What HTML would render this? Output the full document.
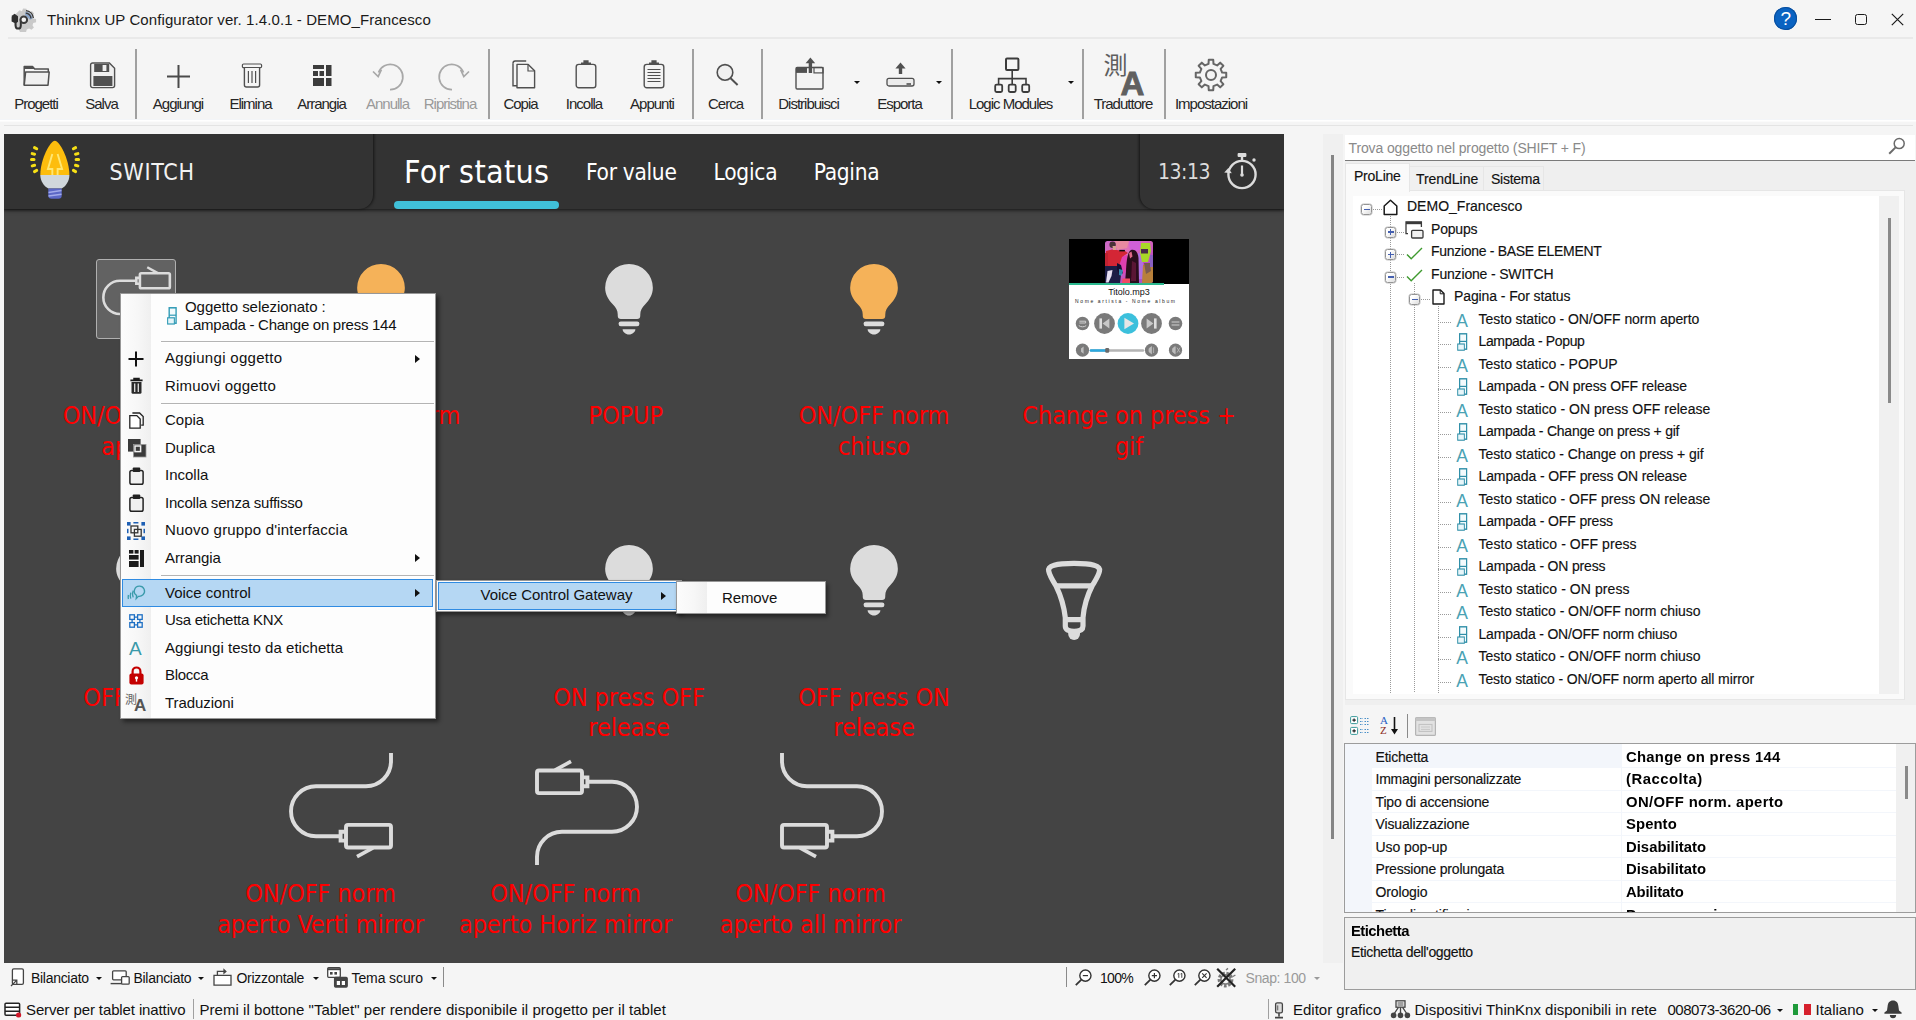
<!DOCTYPE html>
<html lang="it"><head><meta charset="utf-8"><title>Thinknx UP Configurator</title>
<style>
*{box-sizing:border-box;margin:0;padding:0}
html,body{width:1916px;height:1020px;overflow:hidden;background:#f5f5f5}
body{font-family:"Liberation Sans",sans-serif;font-size:15px;color:#000}
#app{position:relative;width:1916px;height:1020px;overflow:hidden;background:#f5f5f5}
.abs{position:absolute}
.t{position:absolute;white-space:pre;line-height:1}
svg{position:absolute;overflow:visible}
/* title bar */
.title{left:47px;top:12px;font-size:15px;letter-spacing:.09px;color:#1a1a1a}
.hline{position:absolute;height:1px;background:#e3e3e3}
/* toolbar */
.tb-lab{position:absolute;top:96px;font-size:15px;letter-spacing:-1px;color:#262626;white-space:pre;line-height:16px;text-align:center;transform:translateX(-50%)}
.tb-lab.dis{color:#9a9a9a}
.tb-sep{position:absolute;top:49px;width:2px;height:70px;background:#a0a0a0;margin-left:-.5px}
.dd{position:absolute;width:0;height:0;border-left:3.5px solid transparent;border-right:3.5px solid transparent;border-top:3.5px solid #111;margin-left:.5px}
/* canvas */
#canvas{position:absolute;left:4px;top:134px;width:1280px;height:829px;background:#444;overflow:hidden}
#hdr{position:absolute;left:0;top:0;width:1280px;height:75px;background:#333;box-shadow:0 1px 4px rgba(0,0,0,.75)}
.tah{font-family:"DejaVu Sans Condensed","DejaVu Sans","Liberation Sans",sans-serif}
.lab{position:absolute;color:#f00;font-family:"DejaVu Sans Condensed","DejaVu Sans","Liberation Sans",sans-serif;font-size:25px;line-height:30.2px;text-align:center;white-space:pre;transform:translateX(-50%);letter-spacing:-.08px}
/* menus */
.menu{position:absolute;background:#fdfdfd;border:1px solid #979797;box-shadow:3px 3px 4px rgba(0,0,0,.45)}
.menu .gut{position:absolute;left:0;top:0;bottom:0;width:30px;background:linear-gradient(90deg,#fcfcfc,#f7f7f7 55%,#efefef)}
.mi{position:absolute;left:43px;font-size:15px;white-space:pre;line-height:18px;color:#111}
.msep{position:absolute;left:30px;right:1px;height:2px;background:#b4b4b4;border-bottom:1px solid #fff}
.marr{position:absolute;width:0;height:0;border-top:4.5px solid transparent;border-bottom:4.5px solid transparent;border-left:5px solid #111}
/* right panel */
.tree{position:absolute;font-size:14px;-webkit-text-stroke:.15px #111;white-space:pre;line-height:16px;color:#111}
.pg{position:absolute;font-size:14px;-webkit-text-stroke:.15px #111;white-space:pre;line-height:16px;color:#111}
.pgv{position:absolute;font-size:14px;font-weight:700;white-space:pre;line-height:16px;color:#000}
/* bottom */
.bt{position:absolute;font-size:14px;letter-spacing:-.3px;white-space:pre;line-height:16px;color:#111}
.st{position:absolute;font-size:15px;white-space:pre;line-height:18px;color:#111;top:1001px}

</style></head>
<body>
<div id="app">
<!-- titlebar -->

<svg style="left:10px;top:7px" width="25" height="24" viewBox="0 0 25 24">
  <path d="M9.5 3.2l2.4 1 1.2-2.6 3.4.2.6 2.8 2.6 1 2.2-1.6 2.2 2.6-1.6 2.4 1 2.4 2.6.6v3.2l-2.8.8-.8 2.2 1.400 2.400-2.400 2.200-2.400-1.400-2.400 1-.6 2.600H10l-1.400-2.800-4-3.200-1.400-6 1.600-5z" fill="#c9c9c9"/>
  <path d="M15.600 4.800a7.500 7.500 0 0 1 7 6.600l-2.600 1.400-5-4.600z" fill="#8aa4c8"/>
  <path d="M15.800 6.200a6 6 0 0 1 5.200 5.200M16 3.600a8.400 8.400 0 0 1 7.400 7.400" fill="none" stroke="#3c3c3c" stroke-width="1.300"/>
  <path d="M2 9.800l2.600-1.800 2.400 1.800v4.600l-1.400 1.200v2.800c0 2 1 3.200 2.600 3.200s2.600-1.200 2.600-3.200v-6.200" fill="none" stroke="#333" stroke-width="2"/>
  <path d="M1.600 10l3-2.200 3 2.200v4.400l-3 1.600-3-1.600z" fill="#2e2e2e"/>
  <circle cx="13.800" cy="12.800" r="3.300" fill="#f2f2f2" stroke="#3a3a3a" stroke-width="2"/>
</svg>
<div class="t title">Thinknx UP Configurator ver. 1.4.0.1 - DEMO_Francesco</div>
<div class="abs" style="left:1774px;top:7px;width:23px;height:23px;border-radius:50%;background:#0a63c2;box-shadow:inset 0 0 0 1px #0a4f9e"></div>
<div class="t" style="left:1780.5px;top:9px;font-size:19px;font-weight:400;color:#fff">?</div>
<div class="abs" style="left:1815px;top:19px;width:16px;height:1px;background:#1a1a1a"></div>
<div class="abs" style="left:1855px;top:13.500px;width:12px;height:11px;border:1.400px solid #1a1a1a;border-radius:2.500px"></div>
<svg style="left:1891px;top:13px" width="13" height="13" viewBox="0 0 13 13"><path d="M.8.8L12.2 12.2M12.2.8L.8 12.2" stroke="#1a1a1a" stroke-width="1.200" fill="none"/></svg>
<div class="hline" style="left:8px;top:37px;width:1905px;height:2px;background:#e9e9e9"></div>

<!-- toolbar -->
<div class="abs" style="left:0;top:119px;width:1916px;height:1px;background:#f3f5f8"></div>
<div class="abs" style="left:0;top:120px;width:1916px;height:1px;background:#fff"></div>
<div class="abs" style="left:0;top:121px;width:1916px;height:1px;background:#fbfbfb"></div>
<div class="hline" style="left:4px;top:125px;width:1909px;background:#e4e4e4"></div>
<svg style="left:23px;top:64px" width="28" height="23" viewBox="0 0 28 23">
<path d="M1.2 21.3V2.4h8.3l2.2 2.6h13.6v3" fill="none" stroke="#505050" stroke-width="1.5" stroke-linejoin="round"/>
<path d="M1.2 2.4h8.3l2.2 2.6H1.2z" fill="#505050"/>
<path d="M1.2 21.3l1.4-13.4h23.6l-1.2 13.4z" fill="#f0f0f0" stroke="#505050" stroke-width="1.5" stroke-linejoin="round"/>
</svg>
<div class="tb-lab " style="left:36px">Progetti</div>
<svg style="left:90px;top:62px" width="26" height="27" viewBox="0 0 26 27">
<path d="M2.6 1h16.8l5.2 5.2v17.4a2 2 0 0 1-2 2H2.6a2 2 0 0 1-2-2V3a2 2 0 0 1 2-2z" fill="#efefef" stroke="#505050" stroke-width="1.4"/>
<rect x="4.2" y="2" width="15" height="8" fill="#505050"/>
<rect x="12.6" y="3" width="3.8" height="6" fill="#efefef"/>
<rect x="3.4" y="14" width="19" height="10" fill="#505050"/>
</svg>
<div class="tb-lab " style="left:101.5px">Salva</div>
<div class="tb-sep" style="left:135px"></div>
<svg style="left:167px;top:65px" width="23" height="23" viewBox="0 0 23 23"><path d="M11.5 0v23M0 11.5h23" stroke="#4a4a4a" stroke-width="2" fill="none"/></svg>
<div class="tb-lab " style="left:178px">Aggiungi</div>
<svg style="left:241px;top:63px" width="22" height="25" viewBox="0 0 22 25">
<rect x="1.4" y="1" width="19.2" height="3.6" rx="1.2" fill="#f5f5f5" stroke="#505050" stroke-width="1.2"/>
<path d="M3.4 5v17a2 2 0 0 0 2 2h11.2a2 2 0 0 0 2-2V5" fill="#f5f5f5" stroke="#505050" stroke-width="1.4"/>
<path d="M7.4 8v12M11 8v12M14.6 8v12" stroke="#505050" stroke-width="1.2"/>
</svg>
<div class="tb-lab " style="left:250.5px">Elimina</div>
<svg style="left:313px;top:65px" width="19" height="21" viewBox="0 0 19 21">
<rect x="0" y="0" width="11" height="4" fill="#3c3c3c"/><rect x="13" y="0" width="5.5" height="11" fill="#3c3c3c"/>
<rect x="0" y="6" width="5" height="5" fill="#3c3c3c"/><rect x="6.5" y="6" width="4.5" height="5" fill="#3c3c3c"/>
<rect x="0" y="13" width="11" height="8" fill="#3c3c3c"/><rect x="13" y="13" width="5.5" height="8" fill="#3c3c3c"/>
</svg>
<div class="tb-lab " style="left:321.5px">Arrangia</div>
<svg style="left:372px;top:62px" width="33" height="29" viewBox="0 0 33 29">
<path d="M6.5 10.5A12.6 12.6 0 1 1 18 27.6" fill="none" stroke="#a8a8a8" stroke-width="1.7"/>
<path d="M1 9.5l5.2 5 3.2-6.8" fill="none" stroke="#a8a8a8" stroke-width="1.7"/>
</svg>
<div class="tb-lab dis" style="left:387.5px">Annulla</div>
<svg style="left:437px;top:62px" width="33" height="29" viewBox="0 0 33 29">
<g transform="translate(33,0) scale(-1,1)">
<path d="M6.5 10.5A12.6 12.6 0 1 1 18 27.6" fill="none" stroke="#a8a8a8" stroke-width="1.7"/>
<path d="M1 9.5l5.2 5 3.2-6.8" fill="none" stroke="#a8a8a8" stroke-width="1.7"/>
</g></svg>
<div class="tb-lab dis" style="left:450px">Ripristina</div>
<div class="tb-sep" style="left:488px"></div>
<svg style="left:512px;top:60px" width="24" height="29" viewBox="0 0 24 29">
<path d="M1 3.2v22.6h4" fill="none" stroke="#505050" stroke-width="1.4"/>
<path d="M1 3.2c0-1.5 1-2.2 2.2-2.2h11" fill="none" stroke="#505050" stroke-width="1.4"/>
<path d="M5 4.4h11.2l6.4 6.4v17H5z" fill="#f5f5f5" stroke="#505050" stroke-width="1.4" stroke-linejoin="round"/>
<path d="M16 4.6v6.4h6.4" fill="none" stroke="#505050" stroke-width="1.2"/>
</svg>
<div class="tb-lab " style="left:520.5px">Copia</div>
<svg style="left:575px;top:59px" width="22" height="30" viewBox="0 0 22 30">
<rect x="1.2" y="5.4" width="19.6" height="23.4" rx="2.6" fill="#f3f3f3" stroke="#505050" stroke-width="1.4"/>
<path d="M6 5.8V3.4h2.4V1.2h5.2v2.2H16v2.4z" fill="#505050"/>
</svg>
<div class="tb-lab " style="left:584px">Incolla</div>
<svg style="left:643px;top:59px" width="22" height="30" viewBox="0 0 22 30">
<rect x="1.2" y="5.4" width="19.6" height="23.4" rx="2.6" fill="#f3f3f3" stroke="#505050" stroke-width="1.4"/>
<path d="M6 5.8V3.4h2.4V1.2h5.2v2.2H16v2.4z" fill="#505050"/>
<path d="M4.5 10.5h13M4.5 13.5h13M4.5 16.5h13M4.5 19.5h13M4.5 22.5h13" stroke="#505050" stroke-width="1.1"/>
</svg>
<div class="tb-lab " style="left:652px">Appunti</div>
<div class="tb-sep" style="left:692px"></div>
<svg style="left:715px;top:63px" width="24" height="23" viewBox="0 0 24 23">
<circle cx="10" cy="9.4" r="7.8" fill="#f0f0f0" stroke="#505050" stroke-width="1.6"/>
<path d="M15.6 15.2l7 6.8" stroke="#505050" stroke-width="2" fill="none"/>
</svg>
<div class="tb-lab " style="left:725.5px">Cerca</div>
<div class="tb-sep" style="left:761px"></div>
<svg style="left:795px;top:57px" width="30" height="33" viewBox="0 0 30 33">
<rect x="1" y="10.5" width="27" height="21.5" rx="1.2" fill="#f3f3f3" stroke="#505050" stroke-width="1.4"/>
<rect x="1" y="10.5" width="11" height="5.4" fill="#505050"/>
<rect x="19" y="10.5" width="9" height="5.4" fill="none" stroke="#505050" stroke-width="1.2"/>
<path d="M15.4 16V5" stroke="#505050" stroke-width="3.4"/>
<path d="M10.6 6.2L15.4.4l4.8 5.8z" fill="#505050"/>
</svg>
<div class="tb-lab " style="left:808.5px">Distribuisci</div>
<div class="dd" style="left:853px;top:81px"></div>
<svg style="left:886px;top:62px" width="29" height="25" viewBox="0 0 29 25">
<path d="M14.5 12V5.2" stroke="#505050" stroke-width="3.4"/>
<path d="M9.4 6.4L14.5.4l5.1 6z" fill="#505050"/>
<rect x="1" y="16.4" width="27" height="7.6" rx="2" fill="#ececec" stroke="#505050" stroke-width="1.3"/>
<rect x="20.5" y="21.2" width="4.5" height="1.6" fill="#505050"/>
</svg>
<div class="tb-lab " style="left:899.5px">Esporta</div>
<div class="dd" style="left:935.5px;top:81px"></div>
<div class="tb-sep" style="left:951px"></div>
<svg style="left:994px;top:57px" width="37" height="37" viewBox="0 0 37 37">
<rect x="12" y="1.4" width="12.4" height="11.6" rx="1" fill="#f5f5f5" stroke="#3c3c3c" stroke-width="2"/>
<path d="M18.2 13v8.6M4.6 27.6v-6h27.4v6M18.2 21.6v6" fill="none" stroke="#3c3c3c" stroke-width="1.6"/>
<rect x="1.2" y="27.6" width="7" height="7.4" rx="1.4" fill="#f5f5f5" stroke="#3c3c3c" stroke-width="1.8"/>
<rect x="14.7" y="27.6" width="7" height="7.4" rx="1.4" fill="#f5f5f5" stroke="#3c3c3c" stroke-width="1.8"/>
<rect x="28.2" y="27.6" width="7" height="7.4" rx="1.4" fill="#f5f5f5" stroke="#3c3c3c" stroke-width="1.8"/>
</svg>
<div class="tb-lab " style="left:1010.5px">Logic Modules</div>
<div class="dd" style="left:1067px;top:81px"></div>
<div class="tb-sep" style="left:1082px"></div>
<div class="t" style="left:1103.5px;top:52.5px;font-size:24px;font-weight:400;color:#5e5e5e;font-family:'Liberation Sans','Noto Sans CJK TC',sans-serif;line-height:26px">測</div>
<div class="t" style="left:1120.5px;top:68.5px;font-size:33px;font-weight:700;color:#606060;line-height:30px;-webkit-text-stroke:.9px #606060">A</div>
<div class="tb-lab " style="left:1123px">Traduttore</div>
<div class="tb-sep" style="left:1164px"></div>
<svg style="left:1195px;top:59px" width="32" height="32" viewBox="0 0 32 32">
<path d="M13.52 4.87L13.76 0.76L18.24 0.76L18.48 4.87L22.12 6.38L25.19 3.64L28.36 6.81L25.62 9.88L27.13 13.52L31.24 13.76L31.24 18.24L27.13 18.48L25.62 22.12L28.36 25.19L25.19 28.36L22.12 25.62L18.48 27.13L18.24 31.24L13.76 31.24L13.52 27.13L9.88 25.62L6.81 28.36L3.64 25.19L6.38 22.12L4.87 18.48L0.76 18.24L0.76 13.76L4.87 13.52L6.38 9.88L3.64 6.81L6.81 3.64L9.88 6.38z" fill="#f5f5f5" stroke="#666" stroke-width="2" stroke-linejoin="round"/>
<circle cx="16" cy="16" r="5" fill="#f5f5f5" stroke="#666" stroke-width="2"/>
</svg>
<div class="tb-lab " style="left:1211px">Impostazioni</div>
<!-- canvas -->
<div id="canvas">
<div id="hdr"></div>
<div class="abs" style="left:-20px;top:-20px;width:389px;height:95px;background:#333;border-bottom-right-radius:14px;box-shadow:1px 0 3px rgba(0,0,0,.6)"></div>
<div class="abs" style="left:1136px;top:-20px;width:200px;height:95px;background:#333;border-bottom-left-radius:14px;box-shadow:-1px 0 3px rgba(0,0,0,.6)"></div>
<svg style="left:25px;top:6px" width="52" height="60" viewBox="0 0 52 60">
<path d="M25.860 .850C21.400 .850 11.300 19 11.300 35.200h29.100C40.400 19 30.300 .850 25.860 .850z" fill="#fdbd0d"/>
<path d="M23.330 35V29H18.930L23.330 14M28.620 35V29H33.090L28.620 14" fill="none" stroke="#ffe773" stroke-width="1.900"/>
<path d="M11.300 35h29.100c0 6.400-3.800 11.400-7.700 13.500H19.300C15.200 46.400 11.300 41.400 11.300 35z" fill="#d0d7dc"/>
<path d="M19.300 48.400h13.400v7.200a3.200 3.200 0 0 1-3.200 3.200h-7a3.200 3.200 0 0 1-3.200-3.200z" fill="#5c68c6"/>
<path d="M19.500 52.400l13-1.800M19.500 56l13-1.800" stroke="#a3abea" stroke-width="1.500"/>
<g stroke="#f7e015" stroke-width="3" stroke-linecap="round" fill="none">
<path d="M5.500 7.600l2.200 1.200M3.200 13.600l2.400.6M2.500 19.600h2.500M3.200 25.900l2.400-.6M5.500 31.600l2.200-1.200"/>
<path d="M46.600 7.600l-2.200 1.200M48.900 13.600l-2.400.6M49.600 19.600h-2.500M48.900 25.900l-2.400-.6M46.600 31.600l-2.200-1.200"/>
</g>
</svg>
<div class="t tah" style="left:105.5px;top:24.7px;font-size:23px;color:#f2f2f2;letter-spacing:.7px;line-height:27px">SWITCH</div>
<div class="t tah" style="left:400px;top:18.6px;font-size:32px;color:#fff;line-height:38px;letter-spacing:.28px">For status</div>
<div class="abs" style="left:390px;top:67px;width:165px;height:8px;border-radius:4px;background:#40c0d8"></div>
<div class="t tah" style="left:582px;top:24.6px;font-size:22.5px;color:#fff;line-height:27px;letter-spacing:-.3px">For value</div>
<div class="t tah" style="left:709.600px;top:24.6px;font-size:22.5px;color:#fff;line-height:27px;letter-spacing:-.25px">Logica</div>
<div class="t tah" style="left:809.800px;top:24.6px;font-size:22.5px;color:#fff;line-height:27px;letter-spacing:-.3px">Pagina</div>
<div class="t tah" style="left:1154px;top:26px;font-size:21px;color:#dcdcdc;line-height:25px;letter-spacing:-.5px">13:13</div>
<svg style="left:1218px;top:17px" width="38" height="40" viewBox="0 0 38 40">
<circle cx="20" cy="23.5" r="13.6" fill="none" stroke="#dcdcdc" stroke-width="2.4"/>
<path d="M20 14.5v9.5" stroke="#dcdcdc" stroke-width="2.2" fill="none"/>
<circle cx="20" cy="24" r="1.8" fill="#dcdcdc"/>
<rect x="15.6" y="2" width="8.8" height="4" rx="1" fill="#dcdcdc"/>
<path d="M20 6v4" stroke="#dcdcdc" stroke-width="2.4"/>
<circle cx="32" cy="9" r="1.7" fill="#dcdcdc"/>
<path d="M2.2 21.6l4.2-4.6 3.4 5.2z" fill="#dcdcdc"/>
</svg>
<div class="abs" style="left:92px;top:125px;width:80px;height:80px;background:#626262;border:1.5px solid #b0b0b0;border-radius:3px"></div>
<svg style="left:98.4px;top:126.7px" width="70.5" height="75.1" viewBox="0 0 106 113" preserveAspectRatio="none">
<g transform="translate(106,0) scale(-1,1)" fill="none" stroke="#dcdcdc" stroke-width="3.9">
<rect x="4" y="18.5" width="45" height="22.6" rx="2"/>
<path d="M49 25.400h5.400v8.800H49"/>
<path d="M54.6 29.8H79a25 25 0 0 1 0 50H29a25 25 0 0 0-25 25V113"/>
<path d="M22 18.2L38 9.4" stroke-width="3.6"/>
</g></svg>
<svg style="left:353.2px;top:129.8px" width="48" height="71" viewBox="0 0 48 71">
<path d="M24 0A23.85 23.85 0 0 0 .15 23.85c0 6.6 3.2 12 7.6 16.4 3.4 3.4 5 6.4 5 10.4v1.2a3.2 3.2 0 0 0 3.2 3.2h16.1a3.2 3.2 0 0 0 3.2-3.2v-1.2c0-4 1.6-7 5-10.4 4.4-4.4 7.6-9.8 7.6-16.4A23.85 23.85 0 0 0 24 0z" fill="#f5b259"/>
<rect x="13.6" y="57.4" width="20.8" height="4.9" rx="2.2" fill="#dcdcdc"/>
<path d="M17.6 65.2h12.8c0 2.6-3 5.3-6.4 5.3s-6.4-2.7-6.4-5.3z" fill="#dcdcdc"/>
</svg>
<svg style="left:600.8px;top:129.8px" width="48" height="71" viewBox="0 0 48 71">
<path d="M24 0A23.85 23.85 0 0 0 .15 23.85c0 6.6 3.2 12 7.6 16.4 3.4 3.4 5 6.4 5 10.4v1.2a3.2 3.2 0 0 0 3.2 3.2h16.1a3.2 3.2 0 0 0 3.2-3.2v-1.2c0-4 1.6-7 5-10.4 4.4-4.4 7.6-9.8 7.6-16.4A23.85 23.85 0 0 0 24 0z" fill="#dcdcdc"/>
<rect x="13.6" y="57.4" width="20.8" height="4.9" rx="2.2" fill="#dcdcdc"/>
<path d="M17.6 65.2h12.8c0 2.6-3 5.3-6.4 5.3s-6.4-2.7-6.4-5.3z" fill="#dcdcdc"/>
</svg>
<svg style="left:846.0px;top:129.8px" width="48" height="71" viewBox="0 0 48 71">
<path d="M24 0A23.85 23.85 0 0 0 .15 23.85c0 6.6 3.2 12 7.6 16.4 3.4 3.4 5 6.4 5 10.4v1.2a3.2 3.2 0 0 0 3.2 3.2h16.1a3.2 3.2 0 0 0 3.2-3.2v-1.2c0-4 1.6-7 5-10.4 4.4-4.4 7.6-9.8 7.6-16.4A23.85 23.85 0 0 0 24 0z" fill="#f5b259"/>
<rect x="13.6" y="57.4" width="20.8" height="4.9" rx="2.2" fill="#dcdcdc"/>
<path d="M17.6 65.2h12.8c0 2.6-3 5.3-6.4 5.3s-6.4-2.7-6.4-5.3z" fill="#dcdcdc"/>
</svg>
<svg style="left:111.5px;top:411.3px" width="48" height="71" viewBox="0 0 48 71">
<path d="M24 0A23.85 23.85 0 0 0 .15 23.85c0 6.6 3.2 12 7.6 16.4 3.4 3.4 5 6.4 5 10.4v1.2a3.2 3.2 0 0 0 3.2 3.2h16.1a3.2 3.2 0 0 0 3.2-3.2v-1.2c0-4 1.6-7 5-10.4 4.4-4.4 7.6-9.8 7.6-16.4A23.85 23.85 0 0 0 24 0z" fill="#dcdcdc"/>
<rect x="13.6" y="57.4" width="20.8" height="4.9" rx="2.2" fill="#dcdcdc"/>
<path d="M17.6 65.2h12.8c0 2.6-3 5.3-6.4 5.3s-6.4-2.7-6.4-5.3z" fill="#dcdcdc"/>
</svg>
<svg style="left:353.2px;top:411.3px" width="48" height="71" viewBox="0 0 48 71">
<path d="M24 0A23.85 23.85 0 0 0 .15 23.85c0 6.6 3.2 12 7.6 16.4 3.4 3.4 5 6.4 5 10.4v1.2a3.2 3.2 0 0 0 3.2 3.2h16.1a3.2 3.2 0 0 0 3.2-3.2v-1.2c0-4 1.6-7 5-10.4 4.4-4.4 7.6-9.8 7.6-16.4A23.85 23.85 0 0 0 24 0z" fill="#dcdcdc"/>
<rect x="13.6" y="57.4" width="20.8" height="4.9" rx="2.2" fill="#dcdcdc"/>
<path d="M17.6 65.2h12.8c0 2.6-3 5.3-6.4 5.3s-6.4-2.7-6.4-5.3z" fill="#dcdcdc"/>
</svg>
<svg style="left:600.8px;top:411.3px" width="48" height="71" viewBox="0 0 48 71">
<path d="M24 0A23.85 23.85 0 0 0 .15 23.85c0 6.6 3.2 12 7.6 16.4 3.4 3.4 5 6.4 5 10.4v1.2a3.2 3.2 0 0 0 3.2 3.2h16.1a3.2 3.2 0 0 0 3.2-3.2v-1.2c0-4 1.6-7 5-10.4 4.4-4.4 7.6-9.8 7.6-16.4A23.85 23.85 0 0 0 24 0z" fill="#dcdcdc"/>
<rect x="13.6" y="57.4" width="20.8" height="4.9" rx="2.2" fill="#dcdcdc"/>
<path d="M17.6 65.2h12.8c0 2.6-3 5.3-6.4 5.3s-6.4-2.7-6.4-5.3z" fill="#dcdcdc"/>
</svg>
<svg style="left:846.0px;top:411.3px" width="48" height="71" viewBox="0 0 48 71">
<path d="M24 0A23.85 23.85 0 0 0 .15 23.85c0 6.6 3.2 12 7.6 16.4 3.4 3.4 5 6.4 5 10.4v1.2a3.2 3.2 0 0 0 3.2 3.2h16.1a3.2 3.2 0 0 0 3.2-3.2v-1.2c0-4 1.6-7 5-10.4 4.4-4.4 7.6-9.8 7.6-16.4A23.85 23.85 0 0 0 24 0z" fill="#dcdcdc"/>
<rect x="13.6" y="57.4" width="20.8" height="4.9" rx="2.2" fill="#dcdcdc"/>
<path d="M17.6 65.2h12.8c0 2.6-3 5.3-6.4 5.3s-6.4-2.7-6.4-5.3z" fill="#dcdcdc"/>
</svg>
<svg style="left:1042px;top:426px" width="57" height="80" viewBox="0 0 57 80">
<g fill="none" stroke="#dcdcdc" stroke-width="5.2" stroke-linejoin="round">
<path d="M2.7 11C1.5 5.5 10 3.4 28.1 3.4S54.7 5.5 53.500 11C52.500 16 49 21 46.200 25.800 42 34 38 46 37 57.600V66C37 69.500 34 71.400 28.100 71.400S19.300 69.500 19.300 66V57.600C18 46 14 34 10 25.800 7 21 3.700 16 2.700 11z"/>
<path d="M10 25.800H46.200M19.300 59.600H37"/>
</g>
<path d="M22.200 70H34v4a5.900 5.900 0 0 1-11.800 0z" fill="#dcdcdc"/>
</svg>
<div class="abs" style="left:1065px;top:105px;width:120px;height:120px;background:#fff;overflow:hidden">
<div class="abs" style="left:0;top:0;width:120px;height:45px;background:#000"></div>
<svg style="left:36px;top:2px;border-radius:2.5px;overflow:hidden" width="48" height="42" viewBox="0 0 48 42">
<defs><filter id="ab" x="-10%" y="-10%" width="120%" height="120%"><feGaussianBlur stdDeviation=".7"/></filter>
<linearGradient id="abg" x1="0" y1="0" x2="1" y2="1"><stop offset="0" stop-color="#c868c8"/><stop offset=".35" stop-color="#e070b8"/><stop offset=".65" stop-color="#c050c0"/><stop offset="1" stop-color="#9a58d0"/></linearGradient></defs>
<rect width="48" height="42" fill="url(#abg)"/>
<g filter="url(#ab)">
<path d="M10 0h14l-2 7-10 2z" fill="#e88aa0"/>
<path d="M24 0h12l-1 9-10 3z" fill="#d060d8"/>
<path d="M14 16l8-2 2 12-8 10-4-8z" fill="#e040b0"/>
<path d="M33 12h5v26h-6z" fill="#b070e0"/>
<path d="M36 2h9l1 8-3 11h-6l-2-9z" fill="#a8d828"/>
<path d="M36 8h7v4.500h-7z" fill="#4a2a48"/>
<path d="M38 24h10v18H37z" fill="#b8803a"/>
<path d="M39 22h6l1 8-5 3z" fill="#7a5a50"/>
<path d="M45 14h3v12h-3z" fill="#8a60c0"/>
<path d="M1 10l6-1.500 13 1.500 3 2-6 4-3 9H.5z" fill="#d42634"/>
<path d="M0 12h3v14H0z" fill="#c02030"/>
<circle cx="7.600" cy="3.800" r="3.200" fill="#4a3038"/>
<path d="M7.500 5h3.500v4H8z" fill="#d8a090"/>
<path d="M14.300 8.900h5.600v1.500h-5.600z" fill="#101010"/>
<path d="M0 25h13l3 9-1 8H0z" fill="#1c1c44"/>
<path d="M2.500 30l5-1 -1 6 -3 6.500H1z" fill="#e6def0"/>
<path d="M12 22l4 2 2 8-3 3-3-6z" fill="#181030"/>
<path d="M26 9c4-1.500 7 2 7.500 8l.5 25H20l1-12c.5-8 1-19 5-21z" fill="#2c0c1c"/>
<path d="M24 12l2.500-1.500 1 5-2.500 2z" fill="#e06888"/>
<path d="M27 20l4 2v18h-5z" fill="#5a1434"/>
<path d="M17.500 37.500h7.500V42h-8z" fill="#f04a64"/>
<path d="M14 28l4 1-1 6-3-1z" fill="#40b8e0" opacity=".7"/>
</g>
</svg>
<div class="abs" style="left:0;top:44px;width:95px;height:2px;background:#2ab88e"></div>
<div class="t" style="left:0;width:120px;text-align:center;top:47.5px;font-size:9px;line-height:10px;color:#111;letter-spacing:0">Titolo.mp3</div>
<div class="t" style="left:6px;top:58.5px;font-size:5px;line-height:6px;color:#222;letter-spacing:1.62px">Nome artista - Nome album</div>
<svg style="left:0;top:66px" width="120" height="54" viewBox="0 0 120 54">
<circle cx="13.5" cy="18.5" r="6.8" fill="#7a7a7a"/><path d="M10.4 16.2h6.200v1.800h-6.200M9.800 20.600c2 1.600 5.400 1.600 7.400 0" stroke="#cfcfcf" stroke-width="1" fill="none"/>
<circle cx="35.5" cy="18.5" r="10.400" fill="#7a7a7a"/><rect x="30.400" y="13.400" width="2.600" height="10.200" fill="#dedede"/><path d="M40.400 13.400v10.200l-6.800-5.100z" fill="#c8c8c8"/>
<circle cx="59" cy="18.500" r="10.400" fill="#3cc0dc"/><path d="M55.400 12.800v11.400l9.600-5.700z" fill="#e6e6e6"/>
<circle cx="82.500" cy="18.500" r="10.400" fill="#7a7a7a"/><rect x="85" y="13.400" width="2.600" height="10.200" fill="#dedede"/><path d="M77.600 13.400v10.200l6.800-5.100z" fill="#c8c8c8"/>
<circle cx="106.500" cy="18.500" r="6.800" fill="#7a7a7a"/><path d="M102.600 17h7.800M102.600 20h7.800" stroke="#cfcfcf" stroke-width="1.100"/>
<circle cx="13.500" cy="45.200" r="6.600" fill="#7a7a7a"/><path d="M12 43.600v3.200l2.600 2v-7.200z" fill="#bdbdbd"/>
<path d="M22 45.500h52" stroke="#b4b4b4" stroke-width="2.400" stroke-linecap="round"/><path d="M22 45.500h16" stroke="#2aa9e0" stroke-width="2.600" stroke-linecap="round"/><rect x="36.200" y="43" width="4" height="4.800" rx="1.200" fill="#6a6a6a"/>
<circle cx="82.500" cy="45.200" r="6.600" fill="#7a7a7a"/><path d="M80 43.600v3.200l2.600 2v-7.200zM84.600 42.400v5.600" fill="#bdbdbd" stroke="#bdbdbd" stroke-width=".8"/>
<circle cx="106.500" cy="45.200" r="6.600" fill="#7a7a7a"/><path d="M103.600 43.600v3.200l2.600 2v-7.200zM108 42.600l3 5M111 42.600l-3 5" fill="#bdbdbd" stroke="#bdbdbd" stroke-width=".8"/>
</svg>
</div>
<svg style="left:285.0px;top:618.5px" width="106.0" height="113.0" viewBox="0 0 106 113" preserveAspectRatio="none">
<g transform="translate(106,113) scale(-1,-1)" fill="none" stroke="#dcdcdc" stroke-width="3.9">
<rect x="4" y="18.5" width="45" height="22.6" rx="2"/>
<path d="M49 25.400h5.400v8.800H49"/>
<path d="M54.6 29.8H79a25 25 0 0 1 0 50H29a25 25 0 0 0-25 25V113"/>
<path d="M22 18.2L38 9.4" stroke-width="3.6"/>
</g></svg>
<svg style="left:529.0px;top:618.0px" width="106.0" height="113.0" viewBox="0 0 106 113" preserveAspectRatio="none">
<g transform="translate(0,0) scale(1,1)" fill="none" stroke="#dcdcdc" stroke-width="3.9">
<rect x="4" y="18.5" width="45" height="22.6" rx="2"/>
<path d="M49 25.400h5.400v8.800H49"/>
<path d="M54.6 29.8H79a25 25 0 0 1 0 50H29a25 25 0 0 0-25 25V113"/>
<path d="M22 18.2L38 9.4" stroke-width="3.6"/>
</g></svg>
<svg style="left:774.0px;top:618.5px" width="106.0" height="113.0" viewBox="0 0 106 113" preserveAspectRatio="none">
<g transform="translate(0,113) scale(1,-1)" fill="none" stroke="#dcdcdc" stroke-width="3.9">
<rect x="4" y="18.5" width="45" height="22.6" rx="2"/>
<path d="M49 25.400h5.400v8.800H49"/>
<path d="M54.6 29.8H79a25 25 0 0 1 0 50H29a25 25 0 0 0-25 25V113"/>
<path d="M22 18.2L38 9.4" stroke-width="3.6"/>
</g></svg>
<div class="lab" style="left:134.0px;top:267.3px">ON/OFF norm
aperto</div>
<div class="lab" style="left:381.0px;top:267.3px">ON/OFF norm
chiuso</div>
<div class="lab" style="left:621.7px;top:267.3px">POPUP</div>
<div class="lab" style="left:870.0px;top:267.3px">ON/OFF norm
chiuso</div>
<div class="lab" style="left:1125.0px;top:267.3px">Change on press +
gif</div>
<div class="lab" style="left:134.5px;top:548.5px">OFF press</div>
<div class="lab" style="left:381.0px;top:548.5px">ON press</div>
<div class="lab" style="left:625.0px;top:548.5px">ON press OFF
release</div>
<div class="lab" style="left:870.0px;top:548.5px">OFF press ON
release</div>
<div class="lab" style="left:316.5px;top:745.3px">ON/OFF norm
aperto Verti mirror</div>
<div class="lab" style="left:561.5px;top:745.3px">ON/OFF norm
aperto Horiz mirror</div>
<div class="lab" style="left:806.5px;top:745.3px">ON/OFF norm
aperto all mirror</div>
</div>
<!-- menu -->
<div class="menu" style="left:120px;top:293px;width:316px;height:426px">
<div class="gut"></div>
<svg style="left:45.5px;top:13px" width="10" height="18" viewBox="0 0 11 18" preserveAspectRatio="none">
<rect x="2.400" y=".800" width="7.600" height="15.400" fill="#f2fafc" stroke="#2f9ab5" stroke-width="1.500"/>
<path d="M2.400 8.200h7.600" stroke="#2f9ab5" stroke-width="1.200"/>
<rect x=".700" y="10.800" width="7.400" height="6.200" fill="#e4f4f8" stroke="#2f9ab5" stroke-width="1.200"/>
</svg>
<div class="mi" style="left:64px;top:4.2px;letter-spacing:-.05px">Oggetto selezionato :</div>
<div class="mi" style="left:64px;top:22.400px;letter-spacing:-.28px">Lampada - Change on press 144</div>
<div class="msep" style="top:47px;left:40px"></div>
<div class="abs" style="left:1px;top:285px;width:311px;height:28px;background:#b5d7f3;border:1px solid #2f8be2"></div>
<div class="mi" style="left:44px;top:55.3px;letter-spacing:0.3px">Aggiungi oggetto</div>
<div class="marr" style="left:294px;top:60.8px"></div>
<svg style="left:7px;top:56.8px" width="16" height="16" viewBox="0 0 16 16"><path d="M8 .5v15M.5 8h15" stroke="#111" stroke-width="2" fill="none"/></svg>
<div class="mi" style="left:44px;top:82.6px;letter-spacing:0.17px">Rimuovi oggetto</div>
<svg style="left:9px;top:84.1px" width="13" height="16" viewBox="0 0 13 16"><path d="M.4 2.400h12.200M4.200 2.200V.700h4.600v1.500" stroke="#1a1a1a" stroke-width="1.900" fill="none"/><path d="M1.500 4h10v10.400a1.400 1.400 0 0 1-1.400 1.400H2.900a1.400 1.400 0 0 1-1.400-1.400z" fill="#2a2a2a"/><path d="M4.700 5.600v8.400M8.300 5.600v8.400" stroke="#e0e0e0" stroke-width="1.300"/></svg>
<div class="mi" style="left:44px;top:117.3px;letter-spacing:0px">Copia</div>
<svg style="left:8px;top:118.3px" width="15" height="17" viewBox="0 0 15 17"><path d="M3.4 1h7.2l3.6 3.6v8.6h-2" fill="none" stroke="#222" stroke-width="1.3"/><path d="M.8 3.6h7l3.4 3.4v9.2H.8z" fill="#fff" stroke="#222" stroke-width="1.3"/></svg>
<div class="mi" style="left:44px;top:144.8px;letter-spacing:0px">Duplica</div>
<svg style="left:7px;top:145.3px" width="18" height="18" viewBox="0 0 18 18"><rect x="0" y="0" width="12.600" height="12.600" fill="#3a3a3a"/><rect x="5.400" y="5.400" width="12.600" height="12.600" fill="#3a3a3a" stroke="#9a9a9a" stroke-width=".8"/><rect x="7" y="7" width="5.600" height="5.600" fill="none" stroke="#f2f2f2" stroke-width="1.500"/></svg>
<div class="mi" style="left:44px;top:172.3px;letter-spacing:0px">Incolla</div>
<svg style="left:8px;top:172.8px" width="15" height="18" viewBox="0 0 15 18"><rect x=".9" y="3.400" width="13.200" height="13.800" rx="1.800" fill="#f0f0f0" stroke="#222" stroke-width="1.500"/><rect x="3.800" y=".4" width="7.400" height="4.600" rx=".8" fill="#222"/></svg>
<div class="mi" style="left:44px;top:199.8px;letter-spacing:-0.21px">Incolla senza suffisso</div>
<svg style="left:8px;top:200.3px" width="15" height="18" viewBox="0 0 15 18"><rect x=".9" y="3.400" width="13.200" height="13.800" rx="1.800" fill="#f0f0f0" stroke="#222" stroke-width="1.500"/><rect x="3.800" y=".4" width="7.400" height="4.600" rx=".8" fill="#222"/></svg>
<div class="mi" style="left:44px;top:227.3px;letter-spacing:0.18px">Nuovo gruppo d&#x27;interfaccia</div>
<svg style="left:6px;top:227.8px" width="18" height="18" viewBox="0 0 18 18"><g fill="#1d5fb4"><rect x="0" y="0" width="3.6" height="3.6"/><rect x="14.4" y="0" width="3.6" height="3.6"/><rect x="0" y="14.4" width="3.6" height="3.6"/><rect x="14.4" y="14.4" width="3.6" height="3.6"/><rect x="6.4" y="0" width="5" height="1.5"/><rect x="6.4" y="16.5" width="5" height="1.5"/><rect x="0" y="6.800" width="1.500" height="4.400"/><rect x="16.500" y="6.800" width="1.500" height="4.400"/></g><g fill="none" stroke="#333" stroke-width="1.300"><rect x="4" y="4" width="6.800" height="6.800"/><rect x="7.400" y="7.400" width="6.800" height="6.800"/></g></svg>
<div class="mi" style="left:44px;top:254.8px;letter-spacing:-0.12px">Arrangia</div>
<div class="marr" style="left:294px;top:260.3px"></div>
<svg style="left:8px;top:255.8px" width="15" height="17" viewBox="0 0 15 17"><g fill="#1a1a1a"><rect x="0" y="0" width="4.400" height="3.600"/><rect x="5.600" y="0" width="4" height="3.600"/><rect x="11" y="0" width="4" height="17"/><rect x="0" y="5" width="9.600" height="4.600"/><rect x="0" y="11" width="9.600" height="6"/></g></svg>
<div class="mi" style="left:44px;top:289.8px;letter-spacing:0px">Voice control</div>
<div class="marr" style="left:294px;top:295.3px"></div>
<svg style="left:6px;top:291.3px" width="19" height="16" viewBox="0 0 19 16"><g fill="none" stroke="#3a9aaa" stroke-width="1.3"><path d="M12.4 1.2a5 5 0 0 1 3.6 8.6c-1.4 1.4-3 1.8-4.6 1.6l-2.2 2.2 .4-3.2a5 5 0 0 1 2.8-9.2z"/><path d="M6.4 5.6c-1 1.8-1 4.6-.2 6.8M3.8 7.6c-.6 1.8-.6 4.2 0 6M1.4 10c-.3 1.4-.3 2.8 0 4"/></g></svg>
<div class="mi" style="left:44px;top:317.3px;letter-spacing:-0.27px">Usa etichetta KNX</div>
<svg style="left:8px;top:319.8px" width="14" height="14" viewBox="0 0 14 14"><g fill="none" stroke="#1d6fc4" stroke-width="1.3"><rect x=".8" y=".8" width="4.6" height="4.6"/><rect x="8.6" y=".8" width="4.6" height="4.6"/><rect x=".8" y="8.6" width="4.6" height="4.6"/><rect x="8.6" y="8.6" width="4.6" height="4.6"/><path d="M5.4 3.1h3.2M5.4 10.9h3.2M3.1 5.4v3.2M10.9 5.4v3.2"/></g></svg>
<div class="mi" style="left:44px;top:344.8px;letter-spacing:0.05px">Aggiungi testo da etichetta</div>
<div class="t" style="left:8px;top:344.8px;font-size:19px;color:#3a9aaa;line-height:19px">A</div>
<div class="mi" style="left:44px;top:372.3px;letter-spacing:-0.3px">Blocca</div>
<svg style="left:8px;top:372.3px" width="15" height="19" viewBox="0 0 15 19"><path d="M3.6 8V5.4a3.9 3.9 0 0 1 7.8 0V8" fill="none" stroke="#c40000" stroke-width="2.200"/><rect x=".4" y="7.400" width="14.200" height="11.200" rx="2" fill="#c40000"/><circle cx="7.5" cy="11.8" r="1.6" fill="#fff"/><rect x="6.8" y="12" width="1.4" height="3.6" fill="#fff"/></svg>
<div class="mi" style="left:44px;top:399.8px;letter-spacing:-0.07px">Traduzioni</div>
<div class="t" style="left:4px;top:400.3px;font-size:12px;color:#666;line-height:12px;font-family:'Liberation Sans','Noto Sans CJK TC',sans-serif">測</div><div class="t" style="left:13px;top:403.3px;font-size:17px;font-weight:700;color:#555;line-height:17px">A</div>
<div class="msep" style="top:109px;left:40px"></div>
<div class="msep" style="top:281px;left:40px"></div>
</div>
<div class="menu" style="left:436px;top:580px;width:246px;height:32px;box-shadow:2px 3px 4px rgba(0,0,0,.45)">
<div class="abs" style="left:1px;top:1px;width:243px;height:28px;background:#b5d7f3;border:1px solid #2f8be2"></div>
<div class="mi" style="left:43.5px;top:5px;letter-spacing:-.03px">Voice Control Gateway</div>
<div class="marr" style="left:224px;top:10.600px"></div>
</div>
<div class="menu" style="left:676px;top:581px;width:150px;height:33px;box-shadow:2px 3px 4px rgba(0,0,0,.45)">
<div class="gut"></div>
<div class="mi" style="left:45px;top:6.6px;letter-spacing:-.1px">Remove</div>
</div>
<!-- right -->
<div class="abs" style="left:1323px;top:134px;width:20px;height:829px;background:#f0f0f0"></div>
<div class="abs" style="left:1331px;top:155px;width:3px;height:684px;background:#858585"></div>
<div class="abs" style="left:1345px;top:161px;width:571px;height:544px;background:#efefef"></div>
<div class="abs" style="left:1345px;top:135px;width:570px;height:26px;background:#fff;border-bottom:1px solid #7a7a7a"></div>
<div class="t" style="left:1348.5px;top:139.6px;font-size:14px;line-height:16px;color:#8a8a8a;letter-spacing:-.12px">Trova oggetto nel progetto (SHIFT + F)</div>
<svg style="left:1888px;top:137px" width="18" height="18" viewBox="0 0 18 18"><circle cx="11.2" cy="6.6" r="5" fill="none" stroke="#6a6a6a" stroke-width="1.5"/><path d="M7.6 10.4L1.2 16.8" stroke="#6a6a6a" stroke-width="2"/></svg>
<div class="abs" style="left:1345px;top:190px;width:560px;height:510px;background:#fafafa;border:1px solid #e6e6e6"></div>
<div class="abs" style="left:1353px;top:196px;width:546px;height:497.500px;background:#f0f0f0"></div>
<div class="abs" style="left:1353px;top:196px;width:526px;height:497.500px;background:#fff"></div>
<div class="abs" style="left:1888px;top:218px;width:3px;height:184.5px;background:#8a8a8a"></div>
<div class="abs" style="left:1409px;top:166px;width:75px;height:25px;background:#f0f0f0;border:1px solid #e6e6e6"></div>
<div class="abs" style="left:1483px;top:166px;width:61px;height:25px;background:#f0f0f0;border:1px solid #e6e6e6"></div>
<div class="abs" style="left:1345px;top:163px;width:65px;height:29px;background:#fafafa;border:1px solid #e6e6e6;border-bottom:none"></div>
<div class="tree" style="left:1354px;top:168.4px;letter-spacing:-.23px">ProLine</div>
<div class="tree" style="left:1416px;top:171.1px;letter-spacing:-.04px">TrendLine</div>
<div class="tree" style="left:1491px;top:171.1px;letter-spacing:-.26px">Sistema</div>
<div class="abs" style="left:1390px;top:215.8px;width:1px;height:477.7px;background:repeating-linear-gradient(180deg,#9a9a9a 0 1px,transparent 1px 2px)"></div>
<div class="abs" style="left:1414px;top:283.3px;width:1px;height:410.2px;background:repeating-linear-gradient(180deg,#9a9a9a 0 1px,transparent 1px 2px)"></div>
<div class="abs" style="left:1438px;top:305.8px;width:1px;height:387.7px;background:repeating-linear-gradient(180deg,#9a9a9a 0 1px,transparent 1px 2px)"></div>
<div class="abs" style="left:1373px;top:209.2px;width:10px;height:1px;background:repeating-linear-gradient(90deg,#9a9a9a 0 1px,transparent 1px 2px)"></div>
<div class="abs" style="left:1397px;top:231.7px;width:8px;height:1px;background:repeating-linear-gradient(90deg,#9a9a9a 0 1px,transparent 1px 2px)"></div>
<div class="abs" style="left:1397px;top:254.2px;width:8px;height:1px;background:repeating-linear-gradient(90deg,#9a9a9a 0 1px,transparent 1px 2px)"></div>
<div class="abs" style="left:1397px;top:276.7px;width:8px;height:1px;background:repeating-linear-gradient(90deg,#9a9a9a 0 1px,transparent 1px 2px)"></div>
<div class="abs" style="left:1421px;top:299.2px;width:10px;height:1px;background:repeating-linear-gradient(90deg,#9a9a9a 0 1px,transparent 1px 2px)"></div>
<div class="abs" style="left:1438px;top:321.7px;width:14px;height:1px;background:repeating-linear-gradient(90deg,#9a9a9a 0 1px,transparent 1px 2px)"></div>
<div class="abs" style="left:1438px;top:344.2px;width:14px;height:1px;background:repeating-linear-gradient(90deg,#9a9a9a 0 1px,transparent 1px 2px)"></div>
<div class="abs" style="left:1438px;top:366.7px;width:14px;height:1px;background:repeating-linear-gradient(90deg,#9a9a9a 0 1px,transparent 1px 2px)"></div>
<div class="abs" style="left:1438px;top:389.2px;width:14px;height:1px;background:repeating-linear-gradient(90deg,#9a9a9a 0 1px,transparent 1px 2px)"></div>
<div class="abs" style="left:1438px;top:411.7px;width:14px;height:1px;background:repeating-linear-gradient(90deg,#9a9a9a 0 1px,transparent 1px 2px)"></div>
<div class="abs" style="left:1438px;top:434.2px;width:14px;height:1px;background:repeating-linear-gradient(90deg,#9a9a9a 0 1px,transparent 1px 2px)"></div>
<div class="abs" style="left:1438px;top:456.7px;width:14px;height:1px;background:repeating-linear-gradient(90deg,#9a9a9a 0 1px,transparent 1px 2px)"></div>
<div class="abs" style="left:1438px;top:479.2px;width:14px;height:1px;background:repeating-linear-gradient(90deg,#9a9a9a 0 1px,transparent 1px 2px)"></div>
<div class="abs" style="left:1438px;top:501.7px;width:14px;height:1px;background:repeating-linear-gradient(90deg,#9a9a9a 0 1px,transparent 1px 2px)"></div>
<div class="abs" style="left:1438px;top:524.2px;width:14px;height:1px;background:repeating-linear-gradient(90deg,#9a9a9a 0 1px,transparent 1px 2px)"></div>
<div class="abs" style="left:1438px;top:546.7px;width:14px;height:1px;background:repeating-linear-gradient(90deg,#9a9a9a 0 1px,transparent 1px 2px)"></div>
<div class="abs" style="left:1438px;top:569.2px;width:14px;height:1px;background:repeating-linear-gradient(90deg,#9a9a9a 0 1px,transparent 1px 2px)"></div>
<div class="abs" style="left:1438px;top:591.7px;width:14px;height:1px;background:repeating-linear-gradient(90deg,#9a9a9a 0 1px,transparent 1px 2px)"></div>
<div class="abs" style="left:1438px;top:614.2px;width:14px;height:1px;background:repeating-linear-gradient(90deg,#9a9a9a 0 1px,transparent 1px 2px)"></div>
<div class="abs" style="left:1438px;top:636.7px;width:14px;height:1px;background:repeating-linear-gradient(90deg,#9a9a9a 0 1px,transparent 1px 2px)"></div>
<div class="abs" style="left:1438px;top:659.2px;width:14px;height:1px;background:repeating-linear-gradient(90deg,#9a9a9a 0 1px,transparent 1px 2px)"></div>
<div class="abs" style="left:1438px;top:681.7px;width:14px;height:1px;background:repeating-linear-gradient(90deg,#9a9a9a 0 1px,transparent 1px 2px)"></div>
<div class="abs" style="left:1361px;top:204.0px;width:11px;height:11px;border:1px solid #949494;border-radius:2.5px;background:linear-gradient(135deg,#fff 30%,#dcdcdc);box-shadow:0 0 0 .5px #c4c4c4"></div><div class="abs" style="left:1363.5px;top:208.7px;width:6px;height:1.6px;background:#4560b0"></div>
<div class="abs" style="left:1385px;top:226.5px;width:11px;height:11px;border:1px solid #949494;border-radius:2.5px;background:linear-gradient(135deg,#fff 30%,#dcdcdc);box-shadow:0 0 0 .5px #c4c4c4"></div><div class="abs" style="left:1387.5px;top:231.2px;width:6px;height:1.6px;background:#4560b0"></div><div class="abs" style="left:1389.7px;top:229.0px;width:1.600px;height:6px;background:#4560b0"></div>
<div class="abs" style="left:1385px;top:249.0px;width:11px;height:11px;border:1px solid #949494;border-radius:2.5px;background:linear-gradient(135deg,#fff 30%,#dcdcdc);box-shadow:0 0 0 .5px #c4c4c4"></div><div class="abs" style="left:1387.5px;top:253.7px;width:6px;height:1.6px;background:#4560b0"></div><div class="abs" style="left:1389.7px;top:251.5px;width:1.600px;height:6px;background:#4560b0"></div>
<div class="abs" style="left:1385px;top:271.5px;width:11px;height:11px;border:1px solid #949494;border-radius:2.5px;background:linear-gradient(135deg,#fff 30%,#dcdcdc);box-shadow:0 0 0 .5px #c4c4c4"></div><div class="abs" style="left:1387.5px;top:276.2px;width:6px;height:1.6px;background:#4560b0"></div>
<div class="abs" style="left:1409px;top:294.0px;width:11px;height:11px;border:1px solid #949494;border-radius:2.5px;background:linear-gradient(135deg,#fff 30%,#dcdcdc);box-shadow:0 0 0 .5px #c4c4c4"></div><div class="abs" style="left:1411.5px;top:298.7px;width:6px;height:1.6px;background:#4560b0"></div>
<svg style="left:1383px;top:198.8px" width="15" height="17" viewBox="0 0 15 17"><path d="M1.2 15.6V7L7.5 1.2 13.8 7v8.6z" fill="#fff" stroke="#1a1a1a" stroke-width="1.5" stroke-linejoin="round"/></svg>
<div class="tree" style="left:1407px;top:198.4px;letter-spacing:0.01px">DEMO_Francesco</div>
<svg style="left:1405px;top:220.8px" width="19" height="18" viewBox="0 0 19 18"><path d="M3 12.6H1V1h15.4v5" fill="none" stroke="#3a3a3a" stroke-width="1.3"/><path d="M1 2h15.4" stroke="#3a3a3a" stroke-width="2.4"/><rect x="6.6" y="9.4" width="11.4" height="7.6" rx="1" fill="#f0f0f0" stroke="#3a3a3a" stroke-width="1.3"/></svg>
<div class="tree" style="left:1431px;top:220.9px;letter-spacing:-0.19px">Popups</div>
<svg style="left:1406px;top:246.8px" width="17" height="13" viewBox="0 0 17 13"><path d="M1 7.4l4.2 4.4L16 1" fill="none" stroke="#3f9a2f" stroke-width="1.4"/></svg>
<div class="tree" style="left:1431px;top:243.4px;letter-spacing:-0.3px">Funzione - BASE ELEMENT</div>
<svg style="left:1406px;top:269.3px" width="17" height="13" viewBox="0 0 17 13"><path d="M1 7.4l4.2 4.4L16 1" fill="none" stroke="#3f9a2f" stroke-width="1.4"/></svg>
<div class="tree" style="left:1431px;top:265.9px;letter-spacing:-0.17px">Funzione - SWITCH</div>
<svg style="left:1432px;top:288.8px" width="13" height="16" viewBox="0 0 13 16"><path d="M1 1h7.4l3.6 3.6V15H1z" fill="#fff" stroke="#1a1a1a" stroke-width="1.4" stroke-linejoin="round"/><path d="M8.2 1.2v3.6h3.6" fill="none" stroke="#1a1a1a" stroke-width="1"/></svg>
<div class="tree" style="left:1454px;top:288.4px;letter-spacing:-0.1px">Pagina - For status</div>
<div class="t" style="left:1456.2px;top:311.8px;font-size:17.500px;line-height:18px;color:#4aa2b4">A</div>
<div class="tree" style="left:1478.5px;top:310.9px;letter-spacing:-0.05px">Testo statico - ON/OFF norm aperto</div>
<svg style="left:1456.5px;top:333.3px" width="10.500" height="18" viewBox="0 0 12 18" preserveAspectRatio="none"><rect x="3" y=".8" width="8" height="15.4" fill="#f4fbfd" stroke="#2f8fa8" stroke-width="1.4"/><path d="M3 8.4h8" stroke="#2f8fa8" stroke-width="1.2"/><rect x=".8" y="11" width="7.6" height="6.2" fill="#e8f6fa" stroke="#2f8fa8" stroke-width="1.1"/></svg>
<div class="tree" style="left:1478.5px;top:333.4px;letter-spacing:-0.35px">Lampada - Popup</div>
<div class="t" style="left:1456.2px;top:356.8px;font-size:17.500px;line-height:18px;color:#4aa2b4">A</div>
<div class="tree" style="left:1478.5px;top:355.9px;letter-spacing:-0.01px">Testo statico - POPUP</div>
<svg style="left:1456.5px;top:378.3px" width="10.500" height="18" viewBox="0 0 12 18" preserveAspectRatio="none"><rect x="3" y=".8" width="8" height="15.4" fill="#f4fbfd" stroke="#2f8fa8" stroke-width="1.4"/><path d="M3 8.4h8" stroke="#2f8fa8" stroke-width="1.2"/><rect x=".8" y="11" width="7.6" height="6.2" fill="#e8f6fa" stroke="#2f8fa8" stroke-width="1.1"/></svg>
<div class="tree" style="left:1478.5px;top:378.4px;letter-spacing:-0.11px">Lampada - ON press OFF release</div>
<div class="t" style="left:1456.2px;top:401.8px;font-size:17.500px;line-height:18px;color:#4aa2b4">A</div>
<div class="tree" style="left:1478.5px;top:400.9px;letter-spacing:0.02px">Testo statico - ON press OFF release</div>
<svg style="left:1456.5px;top:423.3px" width="10.500" height="18" viewBox="0 0 12 18" preserveAspectRatio="none"><rect x="3" y=".8" width="8" height="15.4" fill="#f4fbfd" stroke="#2f8fa8" stroke-width="1.4"/><path d="M3 8.4h8" stroke="#2f8fa8" stroke-width="1.2"/><rect x=".8" y="11" width="7.6" height="6.2" fill="#e8f6fa" stroke="#2f8fa8" stroke-width="1.1"/></svg>
<div class="tree" style="left:1478.5px;top:423.4px;letter-spacing:-0.24px">Lampada - Change on press + gif</div>
<div class="t" style="left:1456.2px;top:446.8px;font-size:17.500px;line-height:18px;color:#4aa2b4">A</div>
<div class="tree" style="left:1478.5px;top:445.9px;letter-spacing:-0.07px">Testo statico - Change on press + gif</div>
<svg style="left:1456.5px;top:468.3px" width="10.500" height="18" viewBox="0 0 12 18" preserveAspectRatio="none"><rect x="3" y=".8" width="8" height="15.4" fill="#f4fbfd" stroke="#2f8fa8" stroke-width="1.4"/><path d="M3 8.4h8" stroke="#2f8fa8" stroke-width="1.2"/><rect x=".8" y="11" width="7.6" height="6.2" fill="#e8f6fa" stroke="#2f8fa8" stroke-width="1.1"/></svg>
<div class="tree" style="left:1478.5px;top:468.4px;letter-spacing:-0.11px">Lampada - OFF press ON release</div>
<div class="t" style="left:1456.2px;top:491.8px;font-size:17.500px;line-height:18px;color:#4aa2b4">A</div>
<div class="tree" style="left:1478.5px;top:490.9px;letter-spacing:0.02px">Testo statico - OFF press ON release</div>
<svg style="left:1456.5px;top:513.3px" width="10.500" height="18" viewBox="0 0 12 18" preserveAspectRatio="none"><rect x="3" y=".8" width="8" height="15.4" fill="#f4fbfd" stroke="#2f8fa8" stroke-width="1.4"/><path d="M3 8.4h8" stroke="#2f8fa8" stroke-width="1.2"/><rect x=".8" y="11" width="7.6" height="6.2" fill="#e8f6fa" stroke="#2f8fa8" stroke-width="1.1"/></svg>
<div class="tree" style="left:1478.5px;top:513.4px;letter-spacing:-0.13px">Lampada - OFF press</div>
<div class="t" style="left:1456.2px;top:536.8px;font-size:17.500px;line-height:18px;color:#4aa2b4">A</div>
<div class="tree" style="left:1478.5px;top:535.9px;letter-spacing:0.07px">Testo statico - OFF press</div>
<svg style="left:1456.5px;top:558.3px" width="10.500" height="18" viewBox="0 0 12 18" preserveAspectRatio="none"><rect x="3" y=".8" width="8" height="15.4" fill="#f4fbfd" stroke="#2f8fa8" stroke-width="1.4"/><path d="M3 8.4h8" stroke="#2f8fa8" stroke-width="1.2"/><rect x=".8" y="11" width="7.6" height="6.2" fill="#e8f6fa" stroke="#2f8fa8" stroke-width="1.1"/></svg>
<div class="tree" style="left:1478.5px;top:558.4px;letter-spacing:-0.17px">Lampada - ON press</div>
<div class="t" style="left:1456.2px;top:581.8px;font-size:17.500px;line-height:18px;color:#4aa2b4">A</div>
<div class="tree" style="left:1478.5px;top:580.9px;letter-spacing:0.07px">Testo statico - ON press</div>
<div class="t" style="left:1456.2px;top:604.3px;font-size:17.500px;line-height:18px;color:#4aa2b4">A</div>
<div class="tree" style="left:1478.5px;top:603.4px;letter-spacing:-0.04px">Testo statico - ON/OFF norm chiuso</div>
<svg style="left:1456.5px;top:625.8px" width="10.500" height="18" viewBox="0 0 12 18" preserveAspectRatio="none"><rect x="3" y=".8" width="8" height="15.4" fill="#f4fbfd" stroke="#2f8fa8" stroke-width="1.4"/><path d="M3 8.4h8" stroke="#2f8fa8" stroke-width="1.2"/><rect x=".8" y="11" width="7.6" height="6.2" fill="#e8f6fa" stroke="#2f8fa8" stroke-width="1.1"/></svg>
<div class="tree" style="left:1478.5px;top:625.9px;letter-spacing:-0.19px">Lampada - ON/OFF norm chiuso</div>
<div class="t" style="left:1456.2px;top:649.3px;font-size:17.500px;line-height:18px;color:#4aa2b4">A</div>
<div class="tree" style="left:1478.5px;top:648.4px;letter-spacing:-0.04px">Testo statico - ON/OFF norm chiuso</div>
<div class="t" style="left:1456.2px;top:671.8px;font-size:17.500px;line-height:18px;color:#4aa2b4">A</div>
<div class="tree" style="left:1478.5px;top:670.9px;letter-spacing:-0.12px">Testo statico - ON/OFF norm aperto all mirror</div>
<div class="abs" style="left:1353px;top:693.5px;width:546px;height:5.500px;background:#fafafa"></div>
<svg style="left:1350px;top:716px" width="21" height="20" viewBox="0 0 21 20">
<rect x=".6" y=".6" width="7" height="7" rx="1" fill="#fff" stroke="#3a9a9a" stroke-width="1"/><path d="M2.4 4.1h3.4M4.1 2.4v3.4" stroke="#222" stroke-width="1.2"/>
<rect x=".6" y="11.4" width="7" height="7" rx="1" fill="#fff" stroke="#3a9a9a" stroke-width="1"/><path d="M2.4 14.9h3.4M4.1 13.2v3.4" stroke="#222" stroke-width="1.2"/>
<path d="M10 2.5h3M14.5 2.5h5M10 5.5h3M14.5 5.5h5M10 8.5h3M14.5 8.5h5M10 13.5h3M14.5 13.5h5M10 16.5h3M14.5 16.5h5" stroke="#4a90c8" stroke-width="1" stroke-dasharray="1.5 1"/>
</svg>
<div class="t" style="left:1380px;top:715px;font-size:11px;line-height:11px;color:#2a5fc4;font-family:'Liberation Serif',serif">A</div>
<div class="t" style="left:1380px;top:725px;font-size:11px;line-height:11px;color:#8a2a1a;font-family:'Liberation Serif',serif">Z</div>
<svg style="left:1390px;top:716px" width="9" height="20" viewBox="0 0 9 20"><path d="M4.5 1v15" stroke="#111" stroke-width="1.6"/><path d="M1 13l3.5 5.4L8 13z" fill="#111"/></svg>
<div class="abs" style="left:1407px;top:714px;width:1px;height:24px;background:#8a8a8a"></div>
<svg style="left:1415px;top:717px" width="21" height="19" viewBox="0 0 21 19"><rect x=".6" y=".6" width="19.8" height="17.8" rx="1" fill="#e2e2e2" stroke="#b4b4b4" stroke-width="1.2"/><rect x=".6" y=".6" width="19.8" height="3.4" fill="#c4c4c4"/><rect x="4" y="7.4" width="13" height="7" fill="none" stroke="#c0c0c0" stroke-width="1"/><path d="M6 10h9M6 12.4h9" stroke="#c8c8c8" stroke-width="1"/></svg>
<div class="abs" style="left:1344px;top:743px;width:572px;height:170px;background:#fff;border:1px solid #9c9c9c"></div>
<div class="abs" style="left:1345px;top:744px;width:27px;height:168px;background:#f3f6fb"></div>
<div class="abs" style="left:1896px;top:744px;width:19px;height:168px;background:#f0f0f0"></div>
<div class="abs" style="left:1905px;top:766px;width:3px;height:33px;background:#8a8a8a"></div>
<div class="abs" style="left:1372px;top:744px;width:249px;height:23px;background:#f3f6fb"></div>
<div class="abs" style="left:1346px;top:744px;width:550px;height:168px;overflow:hidden">
<div class="pg" style="left:29.5px;top:4.5px;letter-spacing:-0.2px">Etichetta</div>
<div class="pgv" style="left:280px;top:4.5px;letter-spacing:0.26px;transform:scaleX(1.06);transform-origin:0 0">Change on press 144</div>
<div class="abs" style="left:26px;top:23.4px;width:524px;height:1px;background:#f3f6fb"></div>
<div class="pg" style="left:29.5px;top:27.0px;letter-spacing:-0.23px">Immagini personalizzate</div>
<div class="pgv" style="left:280px;top:27.0px;letter-spacing:0.47px;transform:scaleX(1.06);transform-origin:0 0">(Raccolta)</div>
<div class="abs" style="left:26px;top:45.9px;width:524px;height:1px;background:#f3f6fb"></div>
<div class="pg" style="left:29.5px;top:49.5px;letter-spacing:-0.14px">Tipo di accensione</div>
<div class="pgv" style="left:280px;top:49.5px;letter-spacing:0.33px;transform:scaleX(1.06);transform-origin:0 0">ON/OFF norm. aperto</div>
<div class="abs" style="left:26px;top:68.4px;width:524px;height:1px;background:#f3f6fb"></div>
<div class="pg" style="left:29.5px;top:72.0px;letter-spacing:-0.15px">Visualizzazione</div>
<div class="pgv" style="left:280px;top:72.0px;letter-spacing:0.08px;transform:scaleX(1.06);transform-origin:0 0">Spento</div>
<div class="abs" style="left:26px;top:90.9px;width:524px;height:1px;background:#f3f6fb"></div>
<div class="pg" style="left:29.5px;top:94.5px;letter-spacing:-0.07px">Uso pop-up</div>
<div class="pgv" style="left:280px;top:94.5px;letter-spacing:0.01px;transform:scaleX(1.06);transform-origin:0 0">Disabilitato</div>
<div class="abs" style="left:26px;top:113.4px;width:524px;height:1px;background:#f3f6fb"></div>
<div class="pg" style="left:29.5px;top:117.0px;letter-spacing:-0.19px">Pressione prolungata</div>
<div class="pgv" style="left:280px;top:117.0px;letter-spacing:0.01px;transform:scaleX(1.06);transform-origin:0 0">Disabilitato</div>
<div class="abs" style="left:26px;top:135.9px;width:524px;height:1px;background:#f3f6fb"></div>
<div class="pg" style="left:29.5px;top:139.5px;letter-spacing:-0.14px">Orologio</div>
<div class="pgv" style="left:280px;top:139.5px;letter-spacing:-0.18px;transform:scaleX(1.06);transform-origin:0 0">Abilitato</div>
<div class="abs" style="left:26px;top:158.4px;width:524px;height:1px;background:#f3f6fb"></div>
<div class="pg" style="left:29.5px;top:162.8px;letter-spacing:-0.15px">Tipo di notifica icona</div>
<div class="pgv" style="left:280px;top:162.8px;letter-spacing:0.13px;transform:scaleX(1.06);transform-origin:0 0">Passa a pagina</div>
<div class="abs" style="left:26px;top:181.7px;width:524px;height:1px;background:#f3f6fb"></div>
<div class="abs" style="left:275px;top:0;width:1px;height:168px;background:#f3f6fb"></div>
</div>
<div class="abs" style="left:1344px;top:917px;width:572px;height:73px;background:#f0f0f0;border:1px solid #9c9c9c"></div>
<div class="pgv" style="left:1351px;top:922.7px;letter-spacing:-.5px;transform:scaleX(1.06);transform-origin:0 0">Etichetta</div>
<div class="pg" style="left:1351px;top:944.2px;letter-spacing:-.36px">Etichetta dell'oggetto</div>
<!-- bottom -->
<svg style="left:10px;top:968px" width="15" height="19" viewBox="0 0 15 19"><rect x="2.4" y=".8" width="11" height="15.6" rx="1.4" fill="#fff" stroke="#444" stroke-width="1.3"/><path d="M1 18l5.6-5.6M6.8 16.4v-4.2H2.6" fill="none" stroke="#444" stroke-width="1.3"/></svg>
<div class="bt" style="left:31px;top:970px">Bilanciato</div>
<div class="dd" style="left:95px;top:977px;border-top-color:#111"></div>
<svg style="left:110px;top:970px" width="20" height="15" viewBox="0 0 20 15"><rect x="2.6" y=".8" width="13.6" height="9" rx="1" fill="#fff" stroke="#444" stroke-width="1.3"/><path d="M.6 13.6h11" stroke="#444" stroke-width="1.4"/><rect x="11.6" y="6.6" width="7.6" height="7.6" rx="1" fill="#fff" stroke="#444" stroke-width="1.3"/></svg>
<div class="bt" style="left:133.5px;top:970px">Bilanciato</div>
<div class="dd" style="left:197.5px;top:977px;border-top-color:#111"></div>
<svg style="left:213px;top:967px" width="19" height="19" viewBox="0 0 19 19"><path d="M1 8.4h17v9.8H1z" fill="#fff" stroke="#444" stroke-width="1.3"/><path d="M4.4 8V4.4h7.2" fill="none" stroke="#444" stroke-width="1.3"/><path d="M10.4 1.2l3.4 3.2-3.4 3.2z" fill="#444"/></svg>
<div class="bt" style="left:236.5px;top:970px">Orizzontale</div>
<div class="dd" style="left:312.5px;top:977px;border-top-color:#111"></div>
<svg style="left:327px;top:967px" width="21" height="21" viewBox="0 0 21 21"><rect x=".7" y=".7" width="12.6" height="9.6" rx="1" fill="#fff" stroke="#444" stroke-width="1.3"/><path d="M.7 2.2h12.6" stroke="#444" stroke-width="2"/><rect x="3" y="5" width="2.6" height="2.6" fill="#444"/><rect x="7.4" y="5" width="2.6" height="2.6" fill="#444"/><rect x="7.6" y="10.4" width="12.6" height="9.6" rx="1" fill="#444" stroke="#444" stroke-width="1.3"/><rect x="9.8" y="14" width="3.2" height="4" fill="#fff"/><rect x="14.8" y="14" width="3.2" height="4" fill="#fff"/></svg>
<div class="bt" style="left:351.5px;top:970px;letter-spacing:-.1px">Tema scuro</div>
<div class="dd" style="left:430px;top:977px;border-top-color:#111"></div>
<div class="abs" style="left:443px;top:967px;width:1px;height:20px;background:#8a8a8a"></div>
<div class="abs" style="left:1066px;top:967px;width:1px;height:20px;background:#8a8a8a"></div>
<svg style="left:1075px;top:969px" width="17" height="17" viewBox="0 0 17 17"><circle cx="10.4" cy="6.6" r="5.6" fill="#fff" stroke="#333" stroke-width="1.4"/><path d="M6.4 10.6L.8 16.2" stroke="#333" stroke-width="1.8"/><path d="M7.8 6.6h5.2" stroke="#333" stroke-width="1.2"/></svg>
<div class="bt" style="left:1100px;top:970px;letter-spacing:-.7px">100%</div>
<svg style="left:1144px;top:969px" width="17" height="17" viewBox="0 0 17 17"><circle cx="10.4" cy="6.6" r="5.6" fill="#fff" stroke="#333" stroke-width="1.4"/><path d="M6.4 10.6L.8 16.2" stroke="#333" stroke-width="1.8"/><path d="M7.8 6.6h5.2M10.4 4v5.2" stroke="#333" stroke-width="1.2"/></svg>
<svg style="left:1169px;top:969px" width="17" height="17" viewBox="0 0 17 17"><circle cx="10.4" cy="6.6" r="5.6" fill="#fff" stroke="#333" stroke-width="1.4"/><path d="M6.4 10.6L.8 16.2" stroke="#333" stroke-width="1.8"/><path d="M8.6 5l1.2-.6v4.4M11.6 5l1.2-.6v4.4" stroke="#333" stroke-width=".9" fill="none"/></svg>
<svg style="left:1194px;top:969px" width="17" height="17" viewBox="0 0 17 17"><circle cx="10.4" cy="6.6" r="5.6" fill="#fff" stroke="#333" stroke-width="1.4"/><path d="M6.4 10.6L.8 16.2" stroke="#333" stroke-width="1.8"/><path d="M8.2 4.4l4.4 4.4M12.6 4.4L8.2 8.8" stroke="#333" stroke-width="1.1"/></svg>
<svg style="left:1216px;top:967px" width="22" height="22" viewBox="0 0 22 22"><circle cx="9.5" cy="12.5" r="6.2" fill="none" stroke="#777" stroke-width="3.4" stroke-dasharray="2.6 1.6"/><circle cx="9.500" cy="12.500" r="4.600" fill="none" stroke="#777" stroke-width="1.600"/><path d="M10 3l2-1.600M17 9.500l2.400-1.500" stroke="#777" stroke-width="1.400"/><path d="M1.200 1.800l18 18M19.200 1.800l-18 18" stroke="#222" stroke-width="2.200" fill="none"/></svg>
<div class="bt" style="left:1245.5px;top:970px;color:#9a9a9a;letter-spacing:-.4px">Snap: 100</div>
<div class="dd" style="left:1313px;top:977px;border-top-color:#9a9a9a"></div>
<svg style="left:4px;top:1002px" width="18" height="16" viewBox="0 0 18 16"><rect x="1" y="1.2" width="14.6" height="12" rx="1" fill="#fff" stroke="#222" stroke-width="1.5"/><path d="M1 5.2h14.6M1 9.2h14.6" stroke="#222" stroke-width="1.5"/><circle cx="14.6" cy="13" r="2.6" fill="#d0182a"/></svg>
<div class="st" style="left:26px;letter-spacing:-.12px">Server per tablet inattivo</div>
<div class="abs" style="left:193px;top:999px;width:1px;height:20px;background:#a0a0a0"></div>
<div class="st" style="left:199.5px;letter-spacing:.04px">Premi il bottone "Tablet" per rendere disponibile il progetto per il tablet</div>
<div class="abs" style="left:1268px;top:999px;width:1px;height:20px;background:#a0a0a0"></div>
<svg style="left:1273px;top:1002px" width="12" height="17" viewBox="0 0 12 17"><rect x="2.6" y=".8" width="6.8" height="10" rx="1.6" fill="#ddd" stroke="#444" stroke-width="1.3"/><path d="M6 11v3.4M2 15.6h8" stroke="#444" stroke-width="1.6"/><path d="M4.6 3.4v5" stroke="#777" stroke-width="1.4"/></svg>
<div class="st" style="left:1293px">Editor grafico</div>
<svg style="left:1390px;top:1000px" width="21" height="19" viewBox="0 0 21 19"><rect x="6" y=".8" width="9" height="6.4" fill="#eee" stroke="#444" stroke-width="1.3"/><path d="M7.6 3h5.8M7.6 5h5.8" stroke="#444" stroke-width=".9"/><path d="M8.4 7.4L4 14M12.6 7.4L17 14M10.5 7.4V14" stroke="#444" stroke-width="1.3" fill="none"/><circle cx="3.6" cy="15.4" r="2.8" fill="#444"/><circle cx="10.5" cy="15.4" r="2.8" fill="#444"/><circle cx="17.4" cy="15.4" r="2.8" fill="#444"/></svg>
<div class="st" style="left:1414.5px">Dispositivi ThinKnx disponibili in rete</div>
<div class="st" style="left:1667.5px;letter-spacing:-.5px">008073-3620-06</div>
<div class="dd" style="left:1776.5px;top:1009px;border-top-color:#111"></div>
<div class="abs" style="left:1793px;top:1004px;width:18px;height:11px;background:linear-gradient(90deg,#1f9a3a 0 5.5px,#f5f5f5 5.5px 11.5px,#d6202c 11.5px)"></div>
<div class="st" style="left:1815.5px">Italiano</div>
<div class="dd" style="left:1871px;top:1009px;border-top-color:#111"></div>
<svg style="left:1883.5px;top:999.5px" width="18" height="19" viewBox="0 0 18 19"><path d="M9 .6C5.600 .6 4 2.800 3.600 6.200L3 10.400.4 12.600V13.800H17.600V12.600L15 10.400 14.400 6.200C14 2.800 12.400 .6 9 .6z" fill="#3c3c3c"/><path d="M5.800 15h6.400a3.200 3.200 0 0 1-6.400 0z" fill="#3c3c3c"/></svg>
</div>
</body></html>
